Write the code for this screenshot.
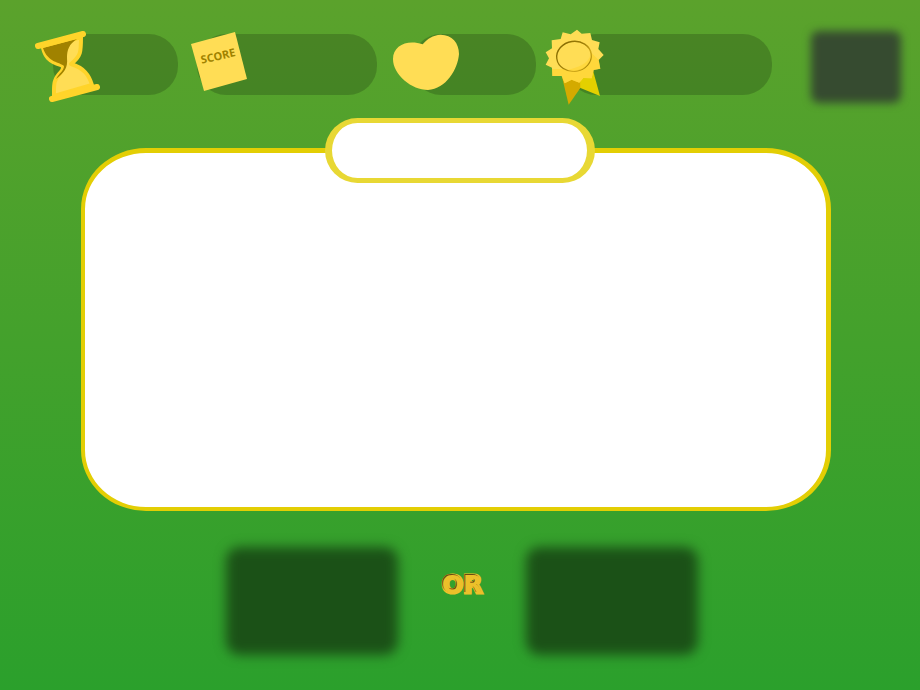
<main class="game">
  <header class="status">
    <div class="stat timer">
      <div class="pill"></div>
      <svg class="icon" viewBox="0 0 80 80" aria-hidden="true">
        <path
          d="M13 23C15 31 18 36 31 40Q35 42 31 47C23 55 24 60 24 71L62 60C59 50 54 43 41 39C51 31 51 27 51 12Z"
          fill="#ffdd55" stroke="#ffd42a" stroke-width="4" stroke-linejoin="round"
        />
        <path d="M13 23L47 14C39 19 37 25 37 33C38 43 34 48 26 54C29 48 34 46 34 41C30 37 18 38 13 23Z" fill="#a08200" />
        <path d="M8 21L53 9M22 74L67 62" stroke="#ffd42a" stroke-width="6" stroke-linecap="round" />
      </svg>
    </div>

    <div class="stat score">
      <div class="pill"></div>
      <svg class="icon" viewBox="0 0 80 80" aria-hidden="true">
        <path d="M6 19L50 7L62 54L19 66Z" fill="#ffdd55" />
        <text class="note" x="33" y="35" text-anchor="middle" transform="rotate(-13 33 31)">SCORE</text>
      </svg>
    </div>

    <div class="stat lives">
      <div class="pill"></div>
      <svg class="icon" viewBox="0 0 80 80" aria-hidden="true">
        <path
          d="M34.700 19.300C39 14 45 10 52.700 9.700C64 9.700 71 18 71 29C70 44 58 64 40 65C24 65 5 50 5 34C5 20 20 14 34.700 19.300Z"
          fill="#ffdd55"
        />
      </svg>
    </div>

    <div class="stat rank">
      <div class="pill"></div>
      <svg class="icon" viewBox="30 15 240 240" aria-hidden="true">
        <defs>
          <linearGradient id="ring" x1="0" y1="0" x2="1" y2="1">
            <stop offset="0" stop-color="#806600" />
            <stop offset="0.5" stop-color="#a08008" />
            <stop offset="0.7" stop-color="#d0a818" />
            <stop offset="1" stop-color="#8a6d00" />
          </linearGradient>
        </defs>
        <path d="M188 148L210 228L146 202L140 170Z" fill="#e3d000" />
        <path d="M97 175L116 254L151 204L150 175Z" fill="#d4aa00" />
        <path
          d="M141 29L155 41L181 39L186 60L209 67L205 87L221 105L206 120L211 146L191 150L185 175L160 174L148 188L125 179L104 190L95 168L67 168L66 143L47 134L57 115L47 97L66 85L65 61L92 57L98 37L122 43Z"
          fill="#ffdd55"
        />
        <path
          d="M206 120L211 146L191 150L185 175L160 174L148 188L125 179L104 190L95 168L67 168L66 147C110 148 170 140 184 98Z"
          fill="#ffd42a" opacity="0.6"
        />
        <ellipse cx="132" cy="109" rx="52" ry="45" fill="#ffdd55" stroke="url(#ring)" stroke-width="4" transform="rotate(-8 132 109)" />
        <path d="M112 150C145 140 172 135 182 104C184 130 160 155 130 154Z" fill="#ffd42a" opacity="0.5" />
      </svg>
    </div>

    <button class="menu" type="button" aria-label="Menu"></button>
  </header>

  <section class="board">
    <div class="title"></div>
  </section>

  <div class="choices">
    <button class="choice" type="button" aria-label="First answer"></button>
    <span class="or">OR</span>
    <button class="choice" type="button" aria-label="Second answer"></button>
  </div>
</main>

<style>
  :global(body) {
    margin: 0;
  }

  .game {
    box-sizing: border-box;
    min-height: 100vh;
    padding-top: 31px;
    background: linear-gradient(#5ba22c, #2ba02c);
    font-family: "DejaVu Sans", sans-serif;
    overflow: hidden;
  }

  .status {
    display: flex;
    align-items: flex-start;
    gap: 13px;
    padding: 0 19px 0 35px;
  }

  .stat {
    position: relative;
    flex: 143 1 0;
    margin-top: 3px;
  }

  .pill {
    height: 61px;
    margin-left: 18px;
    border-radius: 29px;
    background: rgba(0, 0, 0, 0.18);
  }

  .icon {
    position: absolute;
    left: -5px;
    top: -9px;
    width: 80px;
    height: 80px;
    fill: none;
  }

  .score {
    flex-grow: 186;
  }

  .score .pill {
    margin-left: 6px;
  }

  .score .icon {
    left: -6px;
  }

  .lives {
    flex-grow: 145;
  }

  .lives .pill {
    margin-left: 22px;
  }

  .lives .icon {
    left: -2px;
  }

  .rank {
    flex-grow: 223;
  }

  .rank .icon {
    left: -9px;
  }

  .note {
    font: 700 11px "Noto Sans", sans-serif;
    fill: #a08200;
  }

  .menu,
  .choice {
    padding: 0;
    border: 0;
    cursor: pointer;
  }

  .menu {
    flex: none;
    width: 90px;
    height: 72px;
    margin-left: 26px;
    border-radius: 8px;
    background: #364b30;
    filter: blur(4px);
  }

  .board {
    display: flex;
    justify-content: center;
    align-items: flex-start;
    box-sizing: border-box;
    height: 363px;
    margin: 45px 89px 0 81px;
    border: solid #e3ce04;
    border-width: 5px 5px 4px 4px;
    border-radius: 65px / 61px;
    background: #fff;
  }

  .title {
    box-sizing: border-box;
    width: 270px;
    height: 65px;
    margin: -35px 0 0 8px;
    border: solid #e8d834;
    border-width: 5px 8px 5px 7px;
    border-radius: 33px;
    background: #fff;
  }

  .choices {
    display: flex;
    justify-content: center;
    align-items: center;
    padding: 36px 0 32px 4px;
  }

  .choice {
    width: 172px;
    height: 108px;
    border-radius: 14px;
    background: #1b5117;
    filter: blur(6px);
  }

  .or {
    width: 128px;
    padding-bottom: 34px;
    color: #ecc02a;
    font-size: 25px;
    font-weight: 700;
    line-height: 1;
    text-align: center;
    -webkit-text-stroke: 3px #ecc02a;
    paint-order: stroke fill;
    text-shadow: -1px -1px 0 #6b4a12, 1px 0 0 #ecc02a;
  }
</style>
